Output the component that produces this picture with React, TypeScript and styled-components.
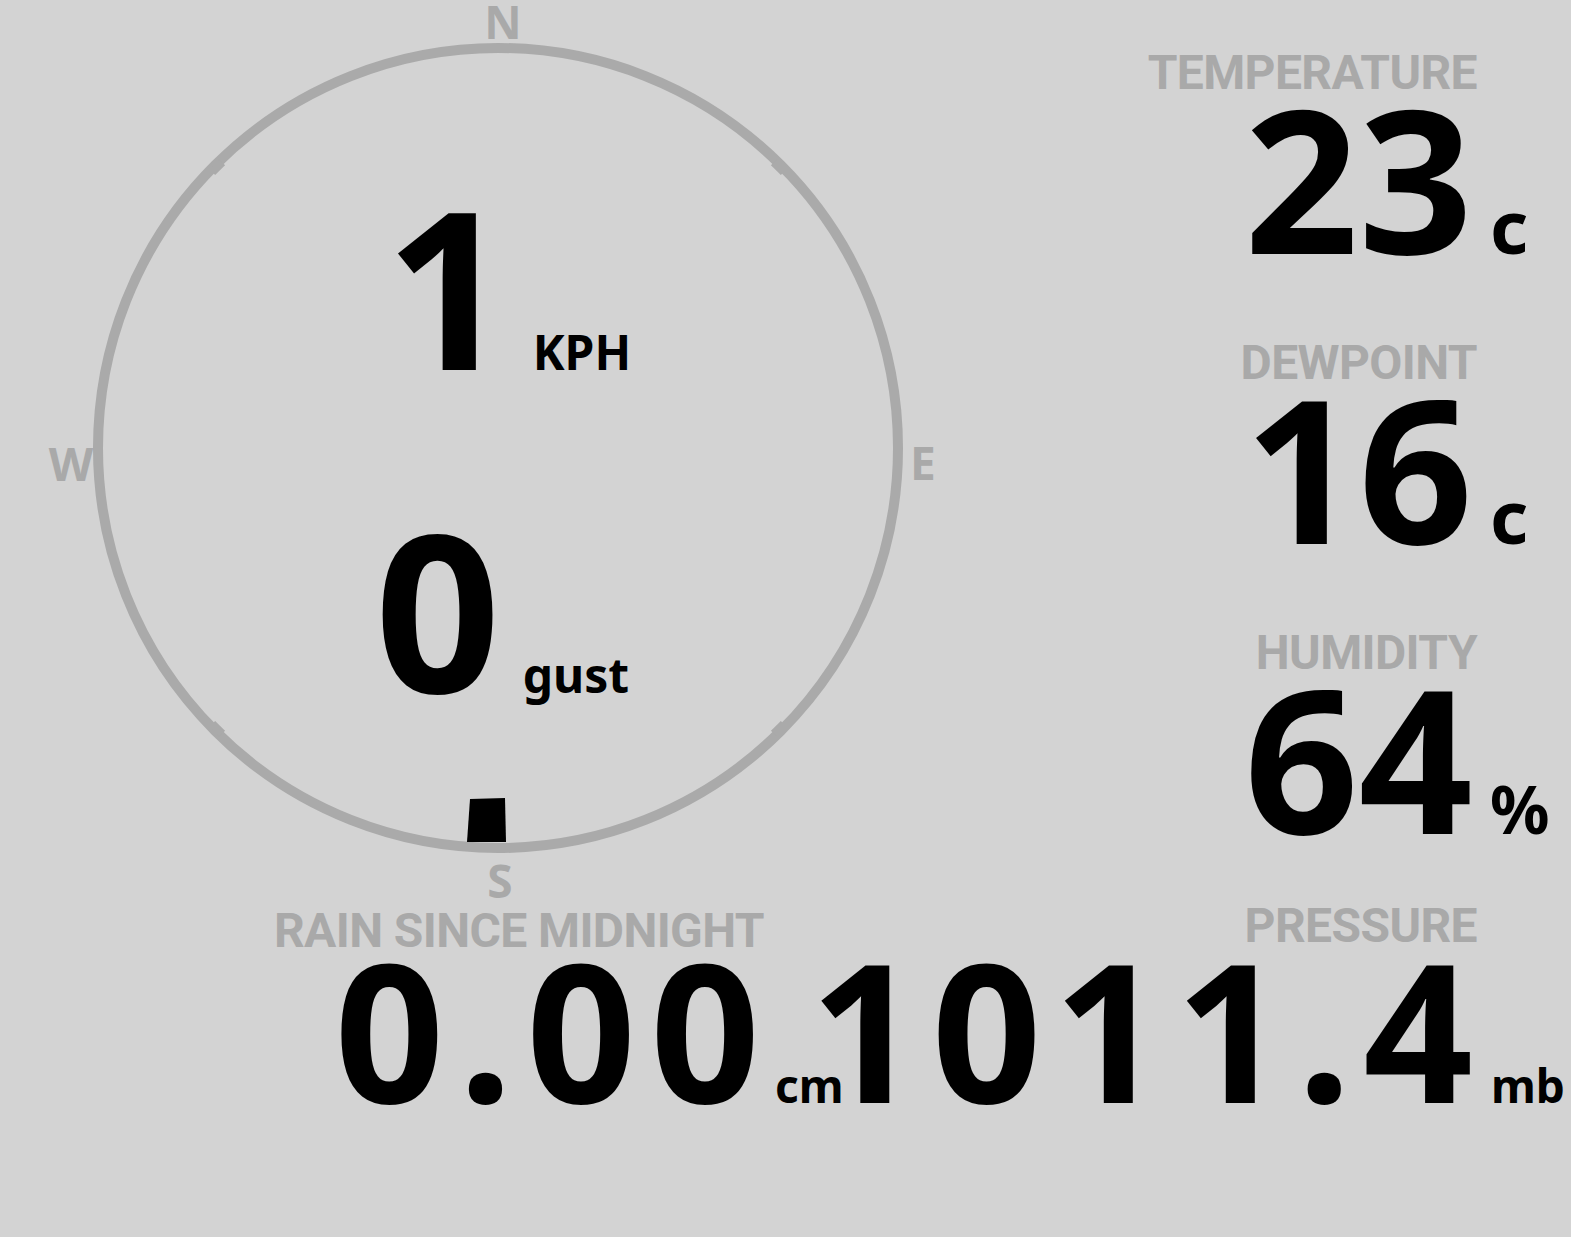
import styled, { createGlobalStyle } from 'styled-components'

const GlobalStyle = createGlobalStyle`
  body {
    margin: 0;
    background: #d3d3d3;
    font-family: "Noto Sans", "DejaVu Sans", sans-serif;
  }
`

const Page = styled.div`
  width: 1571px;
  height: 1237px;
  background: #d3d3d3;
  overflow: hidden;
`

const Top = styled.div`
  display: grid;
  grid-template-columns: 1000px 1fr;
  height: 902px;
`

const Compass = styled.div`
  position: relative;
  display: flex;
  flex-direction: column;
  align-items: center;
  padding-top: 175px;
`

const Dial = styled.svg`
  position: absolute;
  inset: 0;
  width: 1000px;
  height: 902px;
`

const DialLabel = styled.text`
  font-family: "Noto Sans", "DejaVu Sans", sans-serif;
  font-weight: 700;
  font-size: 46px;
  fill: #a9a9a9;
  text-anchor: middle;
`

const WindRow = styled.div<{ $mt: number; $shift: number }>`
  position: relative;
  display: flex;
  align-items: baseline;
  margin-top: ${p => p.$mt}px;
  left: ${p => p.$shift}px;
`

const BigValue = styled.span`
  font-size: 220px;
  line-height: 220px;
  font-weight: 700;
  color: #000;
`

const WindUnit = styled.span`
  font-size: 48px;
  line-height: 1;
  font-weight: 700;
  color: #000;
  margin-left: 22px;
`

const Stats = styled.div`
  display: flex;
  flex-direction: column;
  padding-top: 49px;
`

const Stat = styled.div<{ $unitCol: number }>`
  display: grid;
  grid-template-columns: minmax(0, 1fr) ${p => p.$unitCol}px;
  margin-bottom: 76px;
`

const Label = styled.div<{ $top?: number }>`
  grid-column: 1;
  text-align: right;
  font-family: Roboto, "Noto Sans", sans-serif;
  font-size: 48px;
  line-height: 48px;
  font-weight: 700;
  letter-spacing: -0.6px;
  color: #a9a9a9;
  white-space: nowrap;
  padding-top: ${p => p.$top ?? 0}px;
  margin-right: -4px;
`

const Value = styled.div<{ $mt?: number; $size?: number; $track?: number }>`
  grid-column: 1;
  display: flex;
  justify-content: flex-end;
  font-size: ${p => p.$size ?? 200}px;
  line-height: 160px;
  font-weight: 700;
  color: #000;
  white-space: nowrap;
  letter-spacing: ${p => p.$track ?? 0}px;
  margin-right: ${p => -(p.$track ?? 0)}px;
  margin-top: ${p => p.$mt ?? 0}px;
  align-self: baseline;
`

const Unit = styled.div<{ $size: number; $pad: number }>`
  grid-column: 2;
  align-self: baseline;
  font-size: ${p => p.$size}px;
  line-height: 1;
  font-weight: 700;
  color: #000;
  padding-left: ${p => p.$pad}px;
  white-space: nowrap;
`

const Bottom = styled.div`
  display: flex;
`

const RainCell = styled.div`
  width: 818px;
  flex: none;
`

const PressureCell = styled.div`
  flex: 1;
  min-width: 0;
`

const CX = 498
const CY = 448
const R = 400

const ticks = [45, 135, 225, 315]

const CompassDial = () => (
  <Dial viewBox="0 0 1000 902">
    <circle cx={CX} cy={CY} r={R} fill="none" stroke="#aaaaaa" strokeWidth={10} />
    {ticks.map(a => {
      const rad = (a * Math.PI) / 180
      const x = CX + R * Math.cos(rad)
      const y = CY + R * Math.sin(rad)
      return (
        <rect
          key={a}
          x={x - 4}
          y={y - 7}
          width={8}
          height={14}
          fill="#aaaaaa"
          transform={`rotate(${a} ${x} ${y}) translate(-3 0)`}
        />
      )
    })}
    <polygon points="470,799 505,798 506,842 467,842" fill="#000" />
    <DialLabel x={503} y={39}>N</DialLabel>
    <DialLabel x={500} y={898}>S</DialLabel>
    <DialLabel x={71} y={481}>W</DialLabel>
    <DialLabel x={923} y={480}>E</DialLabel>
  </Dial>
)

type Reading = { label: string; value: string; unit: string; unitSize: number }

const readings: Reading[] = [
  { label: 'TEMPERATURE', value: '23', unit: 'c', unitSize: 74 },
  { label: 'DEWPOINT', value: '16', unit: 'c', unitSize: 74 },
  { label: 'HUMIDITY', value: '64', unit: '%', unitSize: 66 },
]

const App = () => {
  return (
    <Page>
      <GlobalStyle />
      <Top>
        <Compass>
          <CompassDial />
          <WindRow $mt={0} $shift={8}>
            <BigValue>1</BigValue>
            <WindUnit>KPH</WindUnit>
          </WindRow>
          <WindRow $mt={103} $shift={2}>
            <BigValue>0</BigValue>
            <WindUnit>gust</WindUnit>
          </WindRow>
        </Compass>
        <Stats>
          {readings.map(r => (
            <Stat key={r.label} $unitCol={98}>
              <Label>{r.label}</Label>
              <Value>{r.value}</Value>
              <Unit $size={r.unitSize} $pad={17}>{r.unit}</Unit>
            </Stat>
          ))}
        </Stats>
      </Top>
      <Bottom>
        <RainCell>
          <Stat $unitCol={58}>
            <Label $top={5}>RAIN SINCE MIDNIGHT</Label>
            <Value $mt={-6} $size={192} $track={14}>0.00</Value>
            <Unit $size={46} $pad={15}>cm</Unit>
          </Stat>
        </RainCell>
        <PressureCell>
          <Stat $unitCol={98}>
            <Label>PRESSURE</Label>
            <Value $mt={-1} $size={192} $track={12}>1011.4</Value>
            <Unit $size={46} $pad={18}>mb</Unit>
          </Stat>
        </PressureCell>
      </Bottom>
    </Page>
  )
}

export default App
